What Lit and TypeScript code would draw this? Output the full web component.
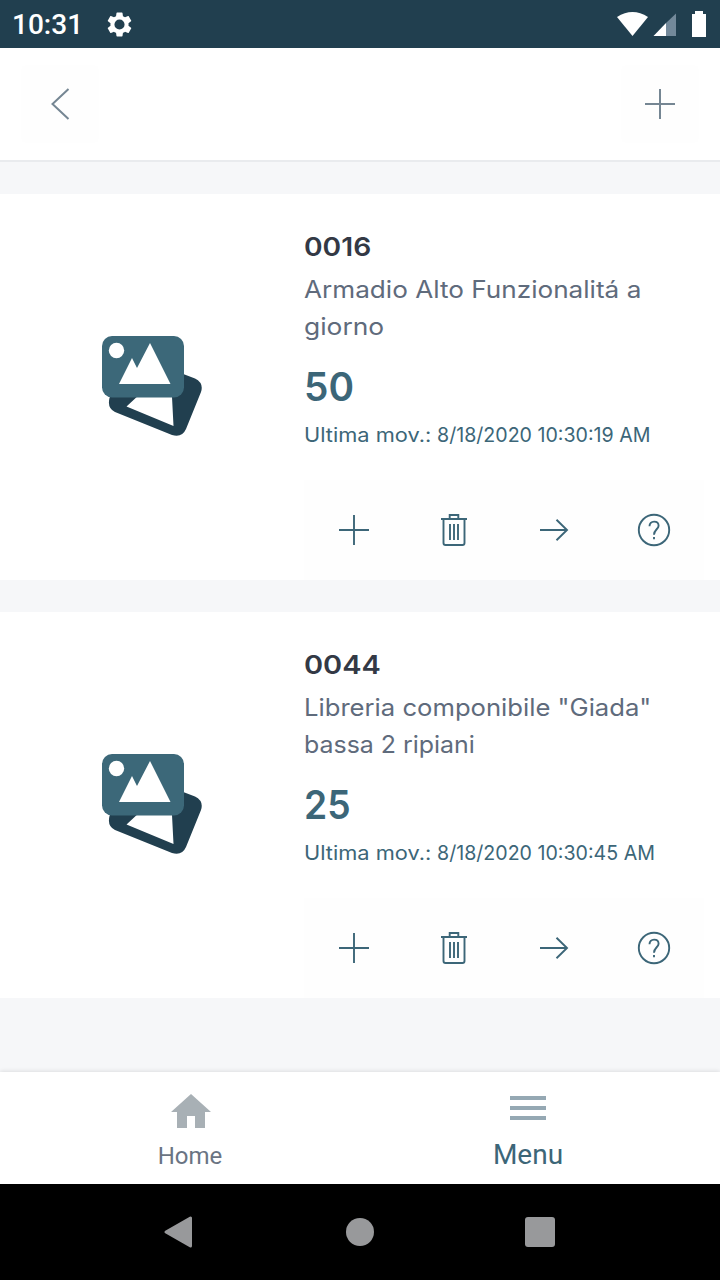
import { LitElement, html, svg, css } from "lit";
import { customElement, property } from "lit/decorators.js";

interface Line { text: string; stretch: number; }
interface Item { code: Line; lines: Line[]; quantity: Line; updated: Line; }

const items: Item[] = [
  {
    code: { text: "0016", stretch: 1.085 },
    lines: [{ text: "Armadio Alto Funzionalitá a", stretch: 1.089 }, { text: "giorno", stretch: 1.1 }],
    quantity: { text: "50", stretch: 0.97 },
    updated: { text: "8/18/2020 10:30:19 AM", stretch: 0.98 },
  },
  {
    code: { text: "0044", stretch: 1.115 },
    lines: [{ text: "Libreria componibile \"Giada\"", stretch: 1.068 }, { text: "bassa 2 ripiani", stretch: 1.038 }],
    quantity: { text: "25", stretch: 0.93 },
    updated: { text: "8/18/2020 10:30:45 AM", stretch: 0.98 },
  },
];

const plus = svg`<path d="M20 5V35M5 20H35"/>`;
const trash = svg`<path d="M7 9H33M9.5 9V33Q9.5 35 11.5 35H28.5Q30.500 35 30.500 33V9M15.700 9V5H24.300V9M16 14V30M20 14V30M24 14V30"/>`;
const arrow = svg`<path d="M6 20H33M22.500 9.700L33 20L22.500 30.300"/>`;
const help = svg`<circle cx="20" cy="20" r="15.200"/><path d="M15.500 16.300C15.500 13.300 17.300 11.600 20.100 11.600C22.800 11.600 24.600 13.300 24.600 15.800C24.600 19 20 19.800 20 24.700"/><path d="M20 27V29.200"/>`;

const span = (l: Line) => html`<span style="transform:scaleX(${l.stretch})">${l.text}</span>`;
const line = (l: Line, cls = "") => html`<div class="line ${cls}">${span(l)}</div>`;

@customElement("stock-card")
class StockCard extends LitElement {
  @property({ attribute: false }) item!: Item;
  static styles = css`
    :host { display: flex; height: 386px; background: #fff; }
    .thumb { width: 304px; flex: none; display: flex; align-items: center; justify-content: center; padding-bottom: 2px; box-sizing: border-box; }
    .thumb svg { display: block; }
    .info { width: 400px; display: flex; flex-direction: column; padding-top: 34px; box-sizing: border-box; }
    .line { white-space: pre; height: 37px; line-height: 37px; font-size: 24px; color: #5f6b7c; }
    .line span { display: inline-block; transform-origin: 0 50%; }
    .code { font-size: 26px; font-weight: 600; color: #333945; margin-bottom: 6px; }
    .qty { font-size: 40px; font-weight: 600; color: #3c6678; height: 54px; line-height: 54px; margin-top: 15px; }
    .upd { font-size: 20px; color: #3c6678; height: 30px; line-height: 30px; margin-top: 6px; display: flex; gap: 10.5px; }
    .actions { display: grid; grid-template-columns: repeat(4, 1fr); margin-top: auto; height: 100px; background: #fefefe; }
    .action { display: grid; place-items: center; padding: 0; border: 0; background: none; }
    .action svg { fill: none; stroke: #3c6678; stroke-width: 1.9; }
  `;
  render() {
    const i = this.item;
    return html`
      <div class="thumb">
        <svg width="100" height="100" viewBox="0 0 100 100">
          <path fill="#213f4f" fill-rule="evenodd" d="M76 36L93 42.500Q102 47 99 56L84 93Q80 102 70 99L13 76Q5 72 7.500 62L16 43ZM70 61L71.500 90L24.500 70.500L38 58Z"/>
          <rect width="82" height="61.500" rx="10" fill="#3c6879"/>
          <circle cx="14.500" cy="14.500" r="7.700" fill="#fff"/>
          <path fill="#fff" d="M17 48L30 22L35 32L48 7L68.500 48Z"/>
        </svg>
      </div>
      <div class="info">
        ${line(i.code, "code")}
        ${i.lines.map((l) => line(l))}
        ${line(i.quantity, "qty")}
        <div class="line upd">${span({ text: "Ultima mov.: ", stretch: 1.09 })}${span(i.updated)}</div>
        <div class="actions">
          ${[plus, trash, arrow, help].map((g) => html`<button class="action"><svg width="40" height="40" viewBox="0 0 40 40">${g}</svg></button>`)}
        </div>
      </div>`;
  }
}

@customElement("app-root")
class AppRoot extends LitElement {
  static styles = css`
    :host { display: flex; flex-direction: column; height: 1280px; width: 720px; background: #f6f7f9; font-family: Inter, sans-serif; overflow: hidden; }
    svg { display: block; }
    .status { height: 48px; box-sizing: border-box; padding: 0 13px 0 12px; display: flex; align-items: center; background: #213f4f; color: #fff; font: 500 28px/48px Roboto, sans-serif; }
    .clock { padding-top: 2px; }
    .gear { margin-left: 22px; }
    .signals { margin-left: auto; }
    .header { height: 112px; background: #fff; border-bottom: 2px solid #e9ebee; display: flex; justify-content: space-between; align-items: center; padding: 0 21px; }
    .tool { width: 78px; height: 78px; display: grid; place-items: center; border: 0; padding: 0; border-radius: 6px; background: #fefefe; }
    .tool svg { fill: none; stroke: #758693; stroke-width: 2; }
    .list { flex: 1; display: flex; flex-direction: column; gap: 32px; padding-top: 32px; }
    .tabs { height: 112px; display: flex; background: #fff; box-shadow: 0 -1px 4px rgba(0,0,0,.1); font-family: Roboto, sans-serif; }
    .tab { width: 338px; display: flex; flex-direction: column; align-items: center; }
    .tab:first-child { width: 336px; padding-left: 23px; }
    .home { font-size: 24px; line-height: 30px; color: #6a7483; margin-top: 13px; padding-right: 2px; }
    .menu { font-size: 28px; line-height: 34px; color: #3c6678; margin-top: 18px; }
    .tab svg { margin-top: 22px; }
    .system { height: 96px; background: #000; display: grid; grid-template-columns: repeat(3, 180px); justify-content: center; place-items: center; }
    .back { margin-right: 4px; }
  `;
  render() {
    return html`
      <div class="status"><span class="clock">10:31</span>
        <svg class="gear" width="29" height="29" viewBox="0 0 24 24"><path fill="#fff" d="M19.430 12.980c.04-.32.07-.64.07-.98s-.03-.66-.07-.98l2.110-1.650c.19-.15.24-.42.12-.64l-2-3.460c-.12-.22-.39-.3-.61-.22l-2.490 1c-.52-.4-1.080-.73-1.690-.98l-.38-2.650C14.460 2.180 14.250 2 14 2h-4c-.25 0-.46.18-.49.42l-.38 2.650c-.61.25-1.170.59-1.690.98l-2.490-1c-.23-.09-.49 0-.61.22l-2 3.460c-.13.22-.07.49.12.64l2.110 1.650c-.04.32-.07.65-.07.98s.03.66.07.98l-2.110 1.650c-.19.15-.24.42-.12.64l2 3.460c.12.22.39.3.61.22l2.490-1c.52.4 1.080.73 1.690.98l.38 2.650c.03.24.24.42.49.42h4c.25 0 .46-.18.49-.42l.38-2.650c.61-.25 1.170-.59 1.690-.98l2.490 1c.23.09.49 0 .61-.22l2-3.460c.12-.22.07-.49-.12-.64l-2.110-1.650zM12 16.200A4.200 4.200 0 1 1 12 7.800A4.200 4.200 0 0 1 12 16.200Z"/></svg>
        <svg class="signals" width="92" height="28" viewBox="615 10 92 28"><g fill="#fff"><path d="M617 17Q632.500 7 648 17L632.500 36Z"/><path d="M653.500 36L666 23V36Z"/><path d="M692 14H695V11H703V14H706V37H692Z"/></g><path fill="#73899a" d="M666 23L676 13.500V36H666Z"/></svg>
      </div>
      <div class="header">
        <button class="tool"><svg width="40" height="40" viewBox="0 0 40 40"><path d="M28.500 5L12.500 20L28.500 35"/></svg></button>
        <button class="tool"><svg width="40" height="40" viewBox="0 0 40 40">${plus}</svg></button>
      </div>
      <div class="list">${items.map((i) => html`<stock-card .item=${i}></stock-card>`)}</div>
      <div class="tabs">
        <div class="tab"><svg width="40" height="34" viewBox="0 0 40 34"><path fill="#a8b0b5" d="M20 0L40 18H34V34H24V22H16V34H6V18H0Z"/></svg><div class="home">Home</div></div>
        <div class="tab"><svg width="36" height="26" viewBox="0 0 36 26"><path stroke="#95a8b3" stroke-width="4" d="M0 4H36M0 14H36M0 24H36"/></svg><div class="menu">Menu</div></div>
      </div>
      <div class="system">
        <svg class="back" width="32" height="34" viewBox="0 0 32 34"><path fill="#98999b" stroke="#98999b" stroke-width="3" stroke-linejoin="round" d="M4 17L28.500 3V31Z"/></svg>
        <svg width="28" height="28" viewBox="0 0 28 28"><circle cx="14" cy="14" r="14" fill="#98999b"/></svg>
        <svg width="30" height="30" viewBox="0 0 30 30"><rect width="30" height="30" rx="3" fill="#98999b"/></svg>
      </div>`;
  }
}
